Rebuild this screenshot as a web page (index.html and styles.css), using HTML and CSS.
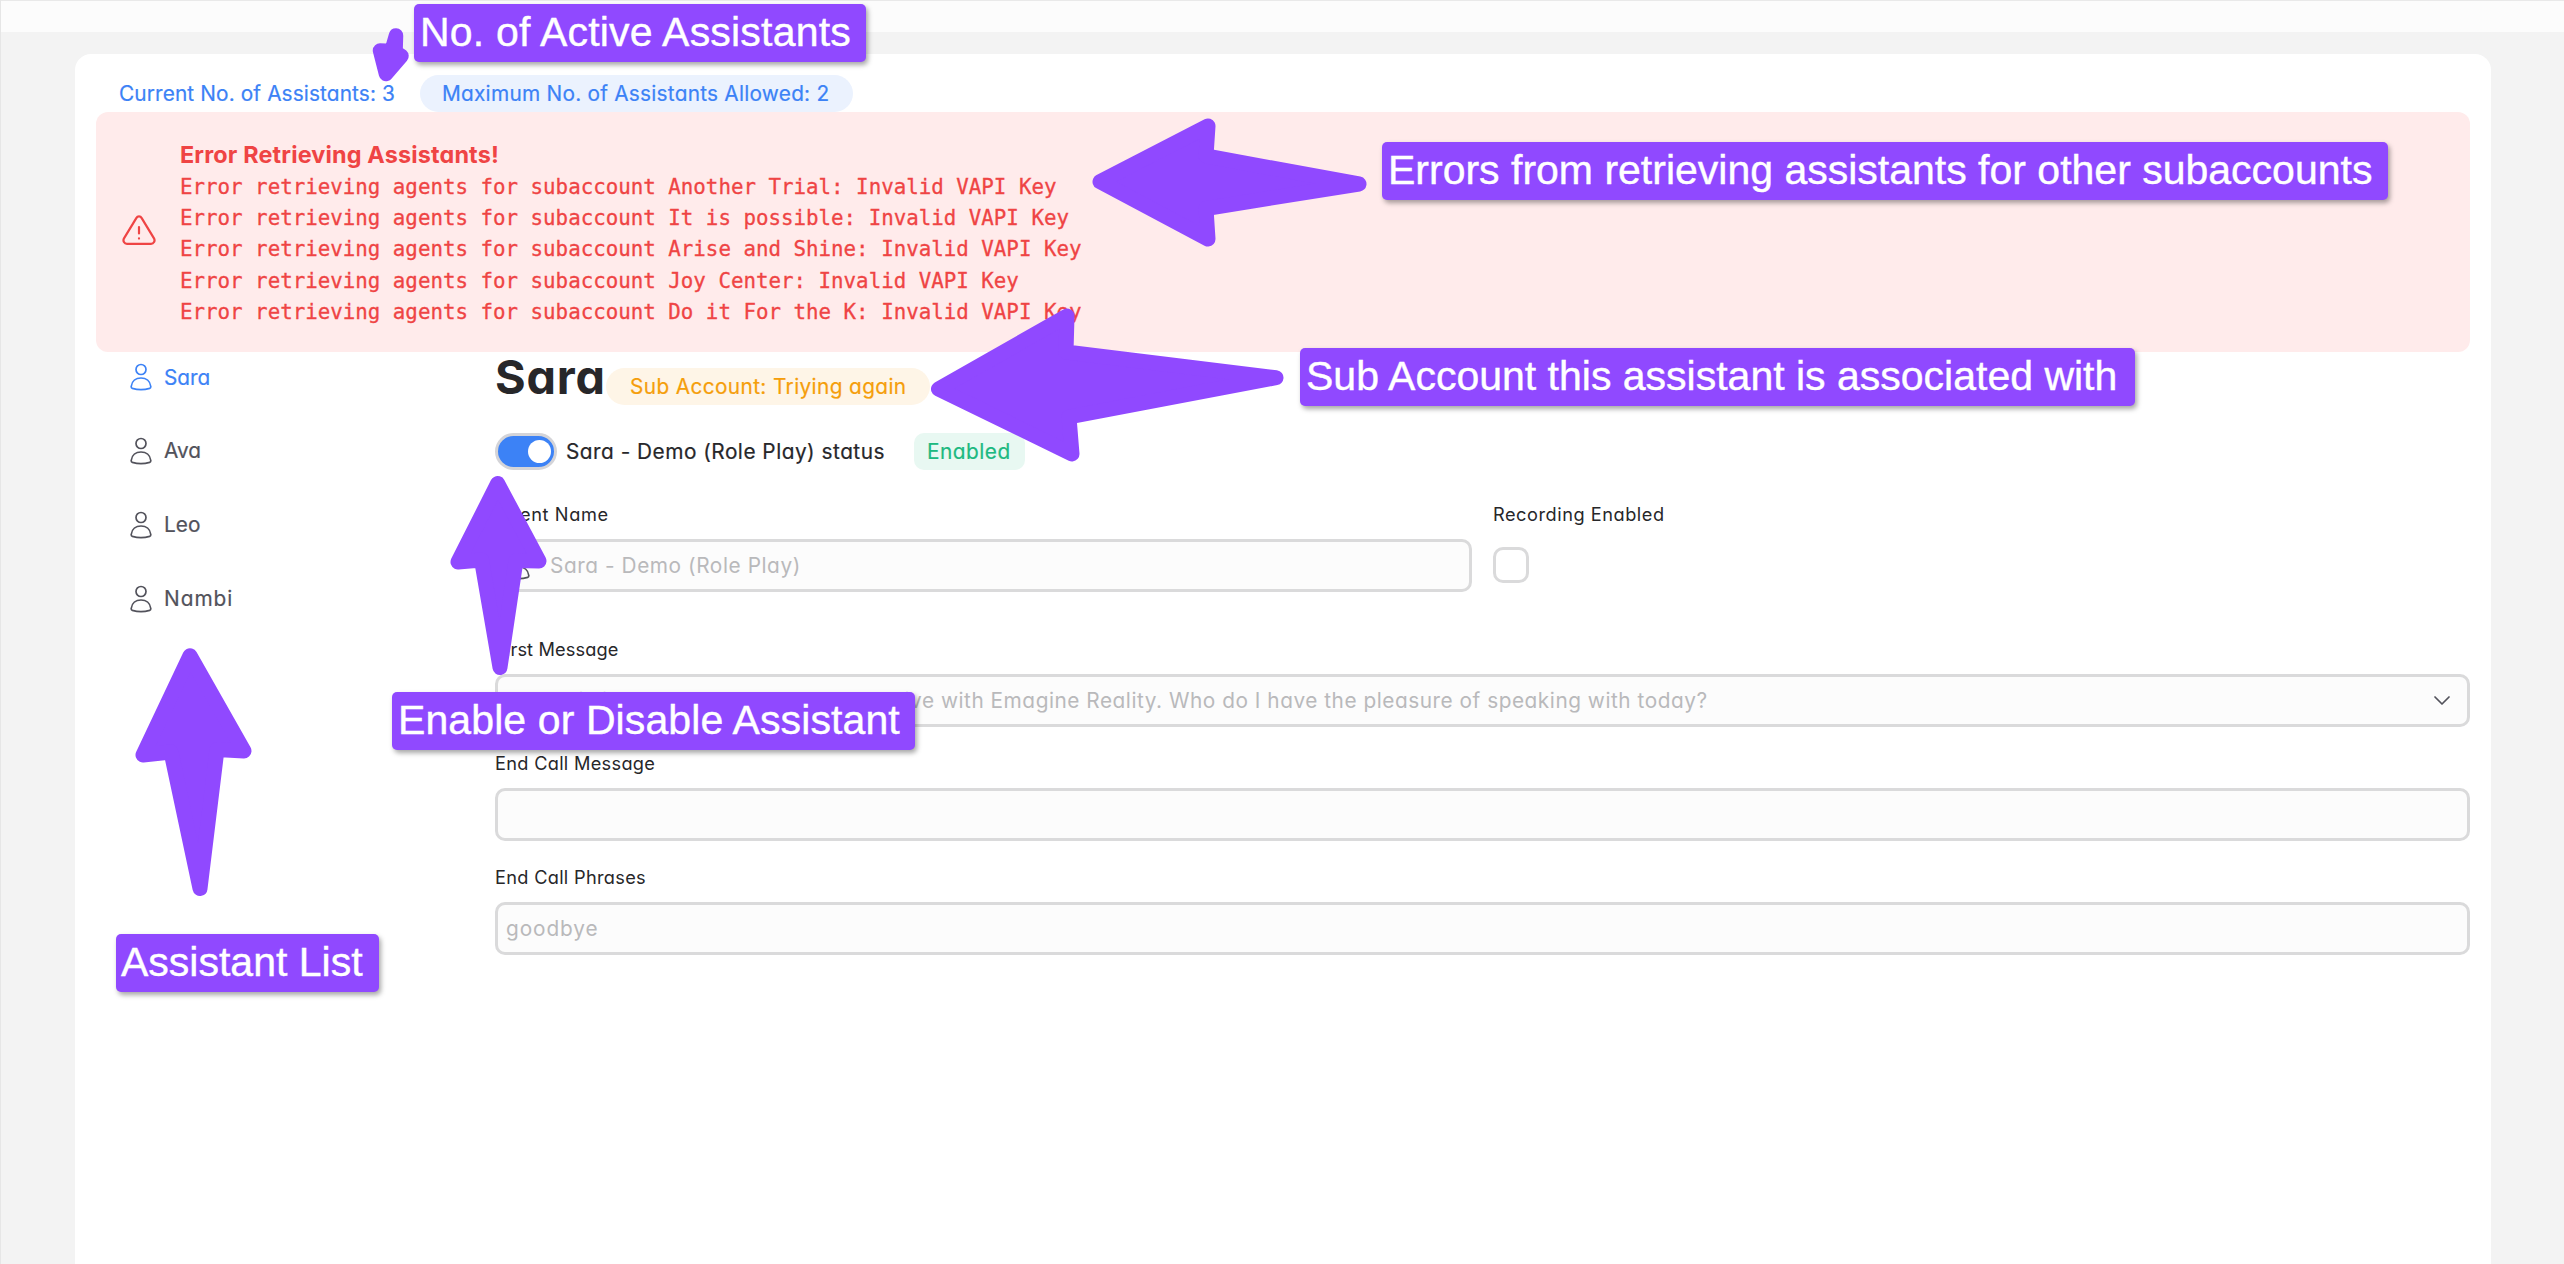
FILE: index.html
```html
<!DOCTYPE html>
<html lang="en">
<head>
<meta charset="utf-8">
<title>Assistants</title>
<link rel="stylesheet" href="styles.css">
</head>
<body>
<div class="topbar"></div>
<main class="card">
  <div class="counts">
    <span class="pill pill-plain"><span class="t-current">Current No. of Assistants: 3</span></span>
    <span class="pill pill-blue"><span class="t-max">Maximum No. of Assistants Allowed: 2</span></span>
  </div>
  <section class="alert">
    <svg class="alert-icon" viewBox="0 0 34 30" fill="none" stroke="currentColor" stroke-width="2.2" stroke-linecap="round" stroke-linejoin="round"><path d="M14.3 3.1 2 23.4c-1.4 2.4.2 5.4 3 5.4h24c2.800 0 4.400-3 3-5.400L19.700 3.100c-1.300-2.200-4.100-2.200-5.400 0Z"/><path d="M17 12v6.500M17 23.300v.3"/></svg>
    <div>
      <h2 class="alert-title"><span class="t-alert">Error Retrieving Assistants!</span></h2>
      <pre class="alert-list">Error retrieving agents for subaccount Another Trial: Invalid VAPI Key
Error retrieving agents for subaccount It is possible: Invalid VAPI Key
Error retrieving agents for subaccount Arise and Shine: Invalid VAPI Key
Error retrieving agents for subaccount Joy Center: Invalid VAPI Key
Error retrieving agents for subaccount Do it For the K: Invalid VAPI Key</pre>
    </div>
  </section>
  <div class="columns">
    <nav class="people">
      <a class="person active"><svg class="user" viewBox="0 0 22 28"><circle cx="11" cy="6.500" r="5"/><path d="M1.200 23.500C1.800 17.800 6 15 11 15s9.200 2.800 9.800 8.500c.1 1-.4 1.600-1.200 1.900-5.300 1.600-11.900 1.600-17.200 0-.8-.3-1.300-.9-1.200-1.900Z"/></svg><span>Sara</span></a>
      <a class="person"><svg class="user" viewBox="0 0 22 28"><circle cx="11" cy="6.500" r="5"/><path d="M1.200 23.500C1.800 17.800 6 15 11 15s9.200 2.800 9.800 8.500c.1 1-.4 1.600-1.200 1.900-5.300 1.600-11.900 1.600-17.200 0-.8-.3-1.300-.9-1.200-1.900Z"/></svg><span>Ava</span></a>
      <a class="person"><svg class="user" viewBox="0 0 22 28"><circle cx="11" cy="6.500" r="5"/><path d="M1.200 23.500C1.800 17.800 6 15 11 15s9.200 2.800 9.800 8.500c.1 1-.4 1.600-1.200 1.900-5.300 1.600-11.900 1.600-17.200 0-.8-.3-1.300-.9-1.200-1.900Z"/></svg><span>Leo</span></a>
      <a class="person"><svg class="user" viewBox="0 0 22 28"><circle cx="11" cy="6.500" r="5"/><path d="M1.200 23.500C1.800 17.800 6 15 11 15s9.200 2.800 9.800 8.500c.1 1-.4 1.600-1.200 1.900-5.300 1.600-11.900 1.600-17.200 0-.8-.3-1.300-.9-1.200-1.900Z"/></svg><span class="t-nambi">Nambi</span></a>
    </nav>
    <section class="detail">
      <div class="heading">
        <h1><span class="t-h1">Sara</span></h1>
        <span class="pill pill-orange"><span class="t-sub">Sub Account: Triying again</span></span>
      </div>
      <div class="status">
        <span class="toggle"><span class="thumb"></span></span>
        <span class="status-text"><span class="t-status">Sara - Demo (Role Play) status</span></span>
        <span class="pill pill-green"><span class="t-enabled">Enabled</span></span>
      </div>
      <div class="row">
        <div class="field name">
          <label><span class="t-agent">Agent Name</span></label>
          <div class="input"><svg class="user" viewBox="0 0 22 28"><circle cx="11" cy="6.500" r="5"/><path d="M1.200 23.500C1.800 17.800 6 15 11 15s9.200 2.800 9.800 8.500c.1 1-.4 1.600-1.200 1.900-5.300 1.600-11.900 1.600-17.200 0-.8-.3-1.300-.9-1.200-1.900Z"/></svg><span class="t-name">Sara - Demo (Role Play)</span></div>
        </div>
        <div class="field rec">
          <label><span class="t-rec">Recording Enabled</span></label>
          <span class="checkbox"></span>
        </div>
      </div>
      <div class="field">
        <label><span class="t-first">First Message</span></label>
        <div class="input select"><span class="t-msg">Hey, this is Sara your customer executive with Emagine Reality. Who do I have the pleasure of speaking with today?</span><svg class="chevron" viewBox="0 0 16 9"><path d="M1 1l7 7 7-7"/></svg></div>
      </div>
      <div class="field">
        <label><span class="t-end">End Call Message</span></label>
        <div class="input"></div>
      </div>
      <div class="field">
        <label><span class="t-phr">End Call Phrases</span></label>
        <div class="input"><span class="t-bye">goodbye</span></div>
      </div>
    </section>
  </div>
</main>
<svg class="arrows" viewBox="0 0 2564 1264" width="2564" height="1264">
  <path class="small" d="M396 35.500 391.500 51 380 50.500 386 74 401.500 56 395.500 52Z"/>
  <path d="M1100 181.700 1208 126 1206 156 1359 184 1206 208.500 1208 239Z"/>
  <path d="M938.500 389 1067 316 1066 352 1276 377.700 1069 417 1072 454Z"/>
  <path d="M497.700 483.500 458 562 481.500 560 500 667.500 516 560.500 539 561Z"/>
  <path d="M190 655.800 143 755 171 752 200 888.500 217 749.500 244 751Z"/>
</svg>
<div class="note n1"><span>No. of Active Assistants</span></div>
<div class="note n2"><span>Errors from retrieving assistants for other subaccounts</span></div>
<div class="note n3"><span>Sub Account this assistant is associated with</span></div>
<div class="note n4"><span>Enable or Disable Assistant</span></div>
<div class="note n5"><span>Assistant List</span></div>
</body>
</html>
```
FILE: styles.css
```css
* { box-sizing: border-box; }
body { margin: 0; width: 2564px; height: 1264px; overflow: hidden; position: relative; display: flex; flex-direction: column; background: #f3f3f3; border-left: 1px solid #e6e6e6; font: 400 20.8px/31px Inter, "Open Sans", sans-serif; font-feature-settings: "cv11"; color: #27272a; }
.topbar { height: 32px; flex: none; background: #fcfcfc; border-top: 1px solid #e9e9e9; }
.card { margin: 22px 73px 0 74px; flex: 1; background: #fff; border-radius: 16px 16px 0 0; padding: 21px 21px 0; white-space: nowrap; }
.counts { display: flex; gap: 2px; height: 37px; }
.pill { height: 37px; line-height: 38px; border-radius: 19px; padding: 0 24px; flex: none; }
.pill-plain { color: #3c82f6; width: 322px; padding-left: 23px; }
.pill-blue { color: #3c82f6; background: #ebf2fe; width: 433px; padding-left: 22px; }
.pill-orange { color: #f59e0b; background: #fef5e7; width: 324px; }
.pill-green { color: #1db981; background: #e8f8f2; width: 111px; border-radius: 10px; padding: 0 13px; }
.pill, .person, .status-text { -webkit-text-stroke: .2px currentColor; }
.t-current { letter-spacing: .13px; }
.t-max { letter-spacing: .25px; }
.t-alert { letter-spacing: .16px; }
.t-h1 { letter-spacing: .8px; }
.t-sub { letter-spacing: .38px; }
.t-status { letter-spacing: .5px; }
.t-enabled { letter-spacing: .5px; }
.t-agent { letter-spacing: .62px; }
.t-rec { letter-spacing: .53px; }
.t-first { letter-spacing: .13px; }
.t-end, .t-phr { letter-spacing: .3px; }
.t-name { letter-spacing: .57px; }
.t-bye { letter-spacing: .9px; }
.t-msg { letter-spacing: .53px; }
.t-nambi { letter-spacing: 1px; }
.alert { height: 240px; background: #ffebeb; border-radius: 12px; color: #ef4444; display: flex; align-items: center; padding-left: 26px; gap: 24px; }
.alert-icon { width: 34px; height: 30px; flex: none; margin-top: -4px; }
.alert-title { margin: 0; padding-top: 2px; font-size: 23.400px; line-height: 34px; font-weight: 700; }
.alert-list { margin: 0; font: 20.800px/31.200px "DejaVu Sans Mono", monospace; -webkit-text-stroke: .3px currentColor; }
.columns { display: flex; }
.people { width: 399px; padding: 8px 0 0 34px; }
.person { display: flex; align-items: center; gap: 12px; height: 34px; margin-bottom: 39.900px; color: #52525b; }
.active { color: #3c82f6; }
.user { width: 22px; height: 28px; flex: none; fill: none; stroke: currentColor; stroke-width: 1.700; }
.detail { flex: 1; }
.heading { display: flex; align-items: flex-start; height: 81px; }
h1 { margin: 0; width: 111px; font-size: 46.800px; line-height: 51px; font-weight: 700; }
.heading .pill { margin-top: 16px; }
.status { display: flex; height: 37px; align-items: center; }
.toggle { width: 62px; height: 37px; border: 3px solid #d4d4d8; border-radius: 19px; background: #3c82f6; display: flex; justify-content: flex-end; align-items: center; padding-right: 3px; }
.thumb { width: 23px; height: 23px; border-radius: 50%; background: #fff; }
.status-text { width: 348px; margin-left: 9px; }
.row { display: flex; gap: 21px; margin: 31px 0 0; height: 135px; }
.field { height: 114px; }
.name { width: 977px; }
label { display: block; height: 38px; line-height: 27px; font-size: 18.200px; }
.input { height: 53px; border: 3px solid #dadadb; border-radius: 10px; background: #fcfcfc; color: #b9b9bb; display: flex; align-items: center; padding-left: 8px; }
.name .input { padding-left: 10px; gap: 20px; }
.name .user { color: #52525b; }
.select { justify-content: space-between; padding-right: 17px; }
.chevron { width: 16px; height: 9px; fill: none; stroke: #52525b; stroke-width: 1.700; stroke-linecap: round; stroke-linejoin: round; }
.checkbox { display: block; width: 36px; height: 36px; border: 3px solid #dadadb; border-radius: 10px; margin-top: 8px; }
.arrows { position: absolute; left: -1px; top: 0; fill: #9049ff; stroke: #9049ff; stroke-width: 15; stroke-linejoin: round; stroke-linecap: round; }
.arrows .small { stroke-width: 14.500; }
.note { position: absolute; height: 58px; border-radius: 5px; background: #9049ff; color: #fff; font: 41px/57px "Liberation Sans", Arial, sans-serif; padding-left: 6px; white-space: nowrap; box-shadow: 2px 3px 5px rgba(0,0,0,.35); -webkit-text-stroke: .4px #fff; }
.n1 { left: 413px; top: 4px; width: 452px; letter-spacing: .2px; }
.n2 { left: 1381px; top: 142px; width: 1006px; }
.n3 { left: 1299px; top: 348px; width: 835px; }
.n4 { left: 391px; top: 692px; width: 523px; letter-spacing: .1px; }
.n5 { left: 115px; top: 934px; width: 263px; padding-left: 5px; }
```
